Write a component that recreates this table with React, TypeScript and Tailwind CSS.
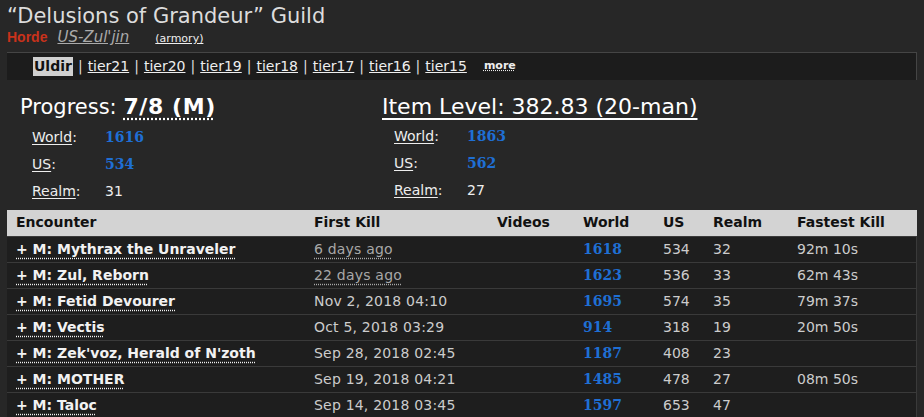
import React from "react";

// raid boss rows for the guild progress table
const KILLS = [
  { name: "+ M: Mythrax the Unraveler", first: "6 days ago", relative: true, world: "1618", us: "534", realm: "32", fastest: "92m 10s" },
  { name: "+ M: Zul, Reborn", first: "22 days ago", relative: true, world: "1623", us: "536", realm: "33", fastest: "62m 43s" },
  { name: "+ M: Fetid Devourer", first: "Nov 2, 2018 04:10", relative: false, world: "1695", us: "574", realm: "35", fastest: "79m 37s" },
  { name: "+ M: Vectis", first: "Oct 5, 2018 03:29", relative: false, world: "914", us: "318", realm: "19", fastest: "20m 50s" },
  { name: "+ M: Zek'voz, Herald of N'zoth", first: "Sep 28, 2018 02:45", relative: false, world: "1187", us: "408", realm: "23", fastest: "" },
  { name: "+ M: MOTHER", first: "Sep 19, 2018 04:21", relative: false, world: "1485", us: "478", realm: "27", fastest: "08m 50s" },
  { name: "+ M: Taloc", first: "Sep 14, 2018 03:45", relative: false, world: "1597", us: "653", realm: "47", fastest: "" },
];

const TIERS = ["tier21", "tier20", "tier19", "tier18", "tier17", "tier16", "tier15"];

function StatRows({ rows }: { rows: { label: string; value: string; blue: boolean }[] }) {
  return (
    <div className="pl-3 pt-[3px]">
      {rows.map((r) => (
        <div key={r.label} className="flex h-[27px] items-center text-[14px]">
          <span className="w-[73px] text-[#eee]">
            <span className="underline underline-offset-2">{r.label}</span>:
          </span>
          {r.blue ? (
            <span className="font-bold text-[#1f6fd4] font-['DejaVu_Serif',serif] text-[14px]">{r.value}</span>
          ) : (
            <span className="text-[#eee]">{r.value}</span>
          )}
        </div>
      ))}
    </div>
  );
}

export default function App() {
  return (
    <main className="min-h-screen w-[924px] h-[417px] overflow-hidden bg-[#272727] text-[#ddd] font-['DejaVu_Sans',sans-serif]">
      <div className="px-[7px] pt-[3px]">
        {/* Header */}
        <h1 className="text-[21px] leading-[26px] text-[#dcdcdc]">“Delusions of Grandeur” Guild</h1>
        <div className="flex items-baseline gap-[10px] -mt-[1px] leading-[18px]">
          <span className="text-[14px] font-bold text-[#c9321b] font-['Liberation_Sans',sans-serif]">Horde</span>
          <span className="text-[15px] italic underline text-[#aaa]">US-Zul'jin</span>
          <span className="ml-[16px] text-[11px] text-[#eee] underline">(armory)</span>
        </div>

        {/* Tier nav */}
        <div className="mt-[4px] h-[28px] bg-[#1c1c1c] border-t border-r border-[#454545] flex items-center pl-[26px] text-[14px]">
          <span className="bg-[#d0d0d0] text-[#111] font-bold px-[1px] leading-[19px]">Uldir</span>
          {TIERS.map((t) => (
            <React.Fragment key={t}>
              <span className="mx-[5px] text-[#ddd]">|</span>
              <span className="underline text-[#eee]">{t}</span>
            </React.Fragment>
          ))}
          <span className="ml-[17px] text-[11px] font-bold text-[#eee] underline decoration-dotted">more</span>
        </div>

        {/* Progress and item level */}
        <div className="flex pl-[13px] pt-[13px]">
          <div className="w-[362px]">
            <div className="text-[21px] leading-[27px] text-white">
              Progress:{" "}
              <span className="text-[22px] font-bold underline decoration-dotted underline-offset-4 tracking-[0.6px]">7/8 (M)</span>
            </div>
            <StatRows
              rows={[
                { label: "World", value: "1616", blue: true },
                { label: "US", value: "534", blue: true },
                { label: "Realm", value: "31", blue: false },
              ]}
            />
          </div>
          <div>
            <div className="text-[22px] leading-[27px] text-white underline underline-offset-4">
              Item Level: 382.83 (20-man)
            </div>
            <StatRows
              rows={[
                { label: "World", value: "1863", blue: true },
                { label: "US", value: "562", blue: true },
                { label: "Realm", value: "27", blue: false },
              ]}
            />
          </div>
        </div>

        {/* Encounter table */}
        <table className="mt-[5px] w-[910px] border-collapse text-[14px] table-fixed">
          <thead>
            <tr className="bg-[#d3d3d3] text-[#111] font-bold h-[26px] text-left">
              <th className="pl-[9px] w-[307px]">Encounter</th>
              <th className="w-[183px]">First Kill</th>
              <th className="w-[86px]">Videos</th>
              <th className="w-[80px]">World</th>
              <th className="w-[50px]">US</th>
              <th className="w-[84px]">Realm</th>
              <th>Fastest Kill</th>
            </tr>
          </thead>
          <tbody>
            {KILLS.map((k) => (
              <tr key={k.name} className="h-[26px] bg-[#1e1e1e] border-t border-[#3a3a3a] border-r">
                <td className="pl-[9px] font-bold text-[#f2f2f2] whitespace-nowrap">
                  <span className="underline decoration-dotted underline-offset-4">{k.name}</span>
                </td>
                <td className="whitespace-nowrap tracking-[0.2px]">
                  {k.relative ? (
                    <span className="text-[#a8a8a8] underline decoration-dotted underline-offset-4">{k.first}</span>
                  ) : (
                    <span className="text-[#ccc]">{k.first}</span>
                  )}
                </td>
                <td></td>
                <td className="font-bold text-[#1f6fd4] font-['DejaVu_Serif',serif]">{k.world}</td>
                <td className="text-[#ccc]">{k.us}</td>
                <td className="text-[#ccc]">{k.realm}</td>
                <td className="text-[#ccc]">{k.fastest}</td>
              </tr>
            ))}
          </tbody>
        </table>
      </div>
    </main>
  );
}
